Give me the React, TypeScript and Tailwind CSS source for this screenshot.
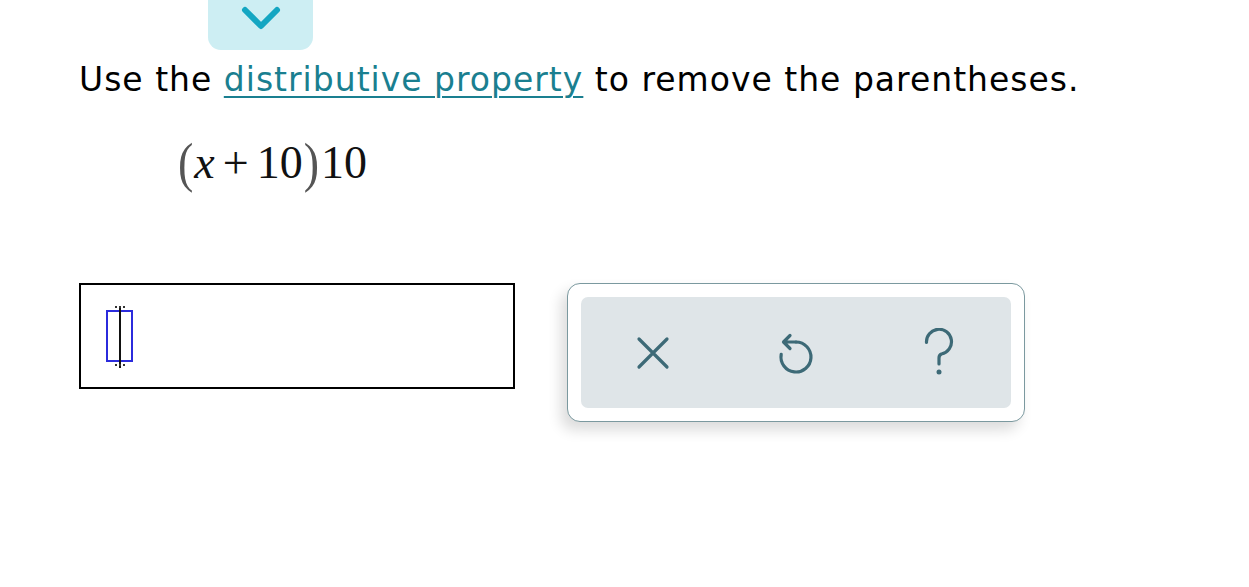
import React from "react";

function Chevron() {
  return (
    <svg width="42" height="26" viewBox="0 0 42 26" fill="none">
      <path d="M5 4 L21 20 L37 4" stroke="#14a6c2" strokeWidth={6} strokeLinecap="round" strokeLinejoin="round" />
    </svg>
  );
}

function ClearIcon() {
  return (
    <svg width="34" height="34" viewBox="0 0 34 34" fill="none">
      <path d="M3 3 L31 31 M31 3 L3 31" stroke="#3d6a77" strokeWidth={3.2} strokeLinecap="round" />
    </svg>
  );
}

function UndoIcon() {
  // arrow at the top, arc turning clockwise round to the left side
  return (
    <svg width="40" height="46" viewBox="0 0 40 46" fill="none">
      <path d="M20 12 A15 15 0 1 1 5.2 24.4" stroke="#3d6a77" strokeWidth={3.2} strokeLinecap="round" />
      <path d="M20 12 L8 12 M14 5.5 L7.5 12 L14 18.5" stroke="#3d6a77" strokeWidth={3.2} strokeLinecap="round" strokeLinejoin="round" />
    </svg>
  );
}

function HelpIcon() {
  return (
    <svg width="34" height="50" viewBox="0 0 34 50" fill="none">
      <path
        d="M4.5 14.5 A12.5 12.5 0 1 1 19.5 26 Q17 27 17 30 L17 36"
        stroke="#3d6a77"
        strokeWidth={3.2}
        strokeLinecap="round"
        strokeLinejoin="round"
      />
      <circle cx="17" cy="44" r="2.5" fill="#3d6a77" />
    </svg>
  );
}

export default function App() {
  return (
    <div className="min-h-screen bg-white pl-[79px] text-black" style={{ fontFamily: "'DejaVu Sans', Verdana, sans-serif" }}>
      {/* collapsed panel tab */}
      <div className="ml-[129px] flex h-[50px] w-[105px] items-center justify-center rounded-b-[13px] bg-[#cdeef3] pb-[12px]">
        <Chevron />
      </div>

      <p className="mt-[12px] text-[33px] leading-[36px] tracking-[1px]">
        Use the{" "}
        <a href="#" className="text-[#1a7f90] underline decoration-[2px] underline-offset-[5px]">
          distributive property
        </a>{" "}
        to remove the parentheses.
      </p>

      {/* expression */}
      <div
        className="ml-[99px] mt-[37px] flex items-center text-[46px] leading-[56px] text-[#111]"
        style={{ fontFamily: "'Liberation Serif', 'Times New Roman', serif" }}
      >
        <span className="scale-y-[1.2] text-[#555]">(</span>
        <span className="ml-[1px] italic">x</span>
        <span className="mx-[8px]">+</span>
        <span>10</span>
        <span className="ml-[1px] scale-y-[1.2] text-[#555]">)</span>
        <span className="ml-[2px]">10</span>
      </div>

      <div className="mt-[92px] flex items-start gap-[52px]">
        {/* answer box */}
        <div className="flex h-[106px] w-[436px] items-center border-2 border-black pl-[25px]">
          <div className="relative h-[52px] w-[27px] border-2 border-[#2b2bdc]">
            <div className="absolute left-[11px] top-[-6px] h-[62px] w-[2px] bg-[#111]" />
            <div className="absolute left-[7px] top-[-6px] h-[2px] w-[10px] border-t-2 border-dotted border-[#333]" />
            <div className="absolute bottom-[-6px] left-[7px] h-[2px] w-[10px] border-t-2 border-dotted border-[#333]" />
          </div>
        </div>

        {/* toolbar */}
        <div className="h-[139px] w-[458px] rounded-[13px] border-[1.5px] border-[#7b999f] bg-white p-[13px] shadow-[-6px_8px_14px_rgba(0,0,0,0.14)]">
          <div className="grid h-full grid-cols-3 rounded-[7px] bg-[#dfe5e8]">
            <button className="flex items-center justify-center">
              <ClearIcon />
            </button>
            <button className="flex items-center justify-center">
              <UndoIcon />
            </button>
            <button className="flex items-center justify-center">
              <HelpIcon />
            </button>
          </div>
        </div>
      </div>
    </div>
  );
}
